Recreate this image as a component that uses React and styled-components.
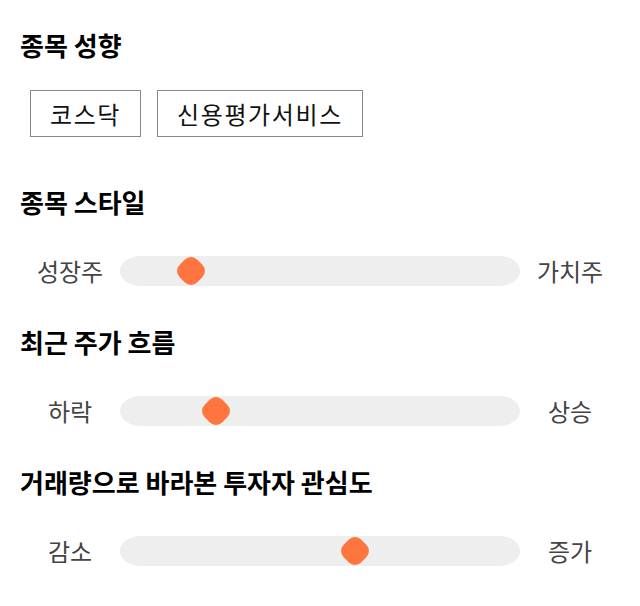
import React from "react";
import styled, { createGlobalStyle } from "styled-components";

const GlobalStyle = createGlobalStyle`
  body {
    margin: 0;
    background: #fff;
    font-family: "Noto Sans CJK KR", "Noto Sans", sans-serif;
  }
`;

const sliders = [
  { title: "종목 스타일", left: "성장주", right: "가치주", value: 15 },
  { title: "최근 주가 흐름", left: "하락", right: "상승", value: 22 },
  { title: "거래량으로 바라본 투자자 관심도", left: "감소", right: "증가", value: 59.5 },
];

const App = () => {
  return (
    <Page>
      <GlobalStyle />
      <Section>
        <Title>종목 성향</Title>
        <Tags>
          <Tag>코스닥</Tag>
          <Tag>신용평가서비스</Tag>
        </Tags>
      </Section>
      {sliders.map((s) => (
        <Section key={s.title}>
          <Title>{s.title}</Title>
          <SliderRow>
            <Side>{s.left}</Side>
            <Track>
              {/* thumb position comes from data */}
              <Thumb style={{ left: `calc(15px + (100% - 30px) * ${s.value / 100})` }} />
            </Track>
            <Side>{s.right}</Side>
          </SliderRow>
        </Section>
      ))}
    </Page>
  );
};

const Page = styled.div`
  width: 640px;
  box-sizing: border-box;
  padding: 28px 20px 0;
`;

const Section = styled.section`
  display: flex;
  flex-direction: column;
`;

const Title = styled.h2`
  margin: 0;
  font-size: 26px;
  line-height: 33px;
  font-weight: 700;
  color: #000;
`;

const Tags = styled.div`
  display: flex;
  gap: 16px;
  padding-left: 10px;
  margin: 29px 0 48px;
`;

const Tag = styled.div`
  height: 47px;
  box-sizing: border-box;
  padding: 0 19px;
  border: 1px solid #888;
  display: flex;
  align-items: center;
  font-size: 24px;
  letter-spacing: 1.6px;
  color: #111;
`;

const SliderRow = styled.div`
  display: grid;
  grid-template-columns: 100px 1fr 100px;
  align-items: center;
  height: 30px;
  margin: 38px 0 39px;
`;

const Side = styled.div`
  text-align: center;
  font-size: 24px;
  line-height: 30px;
  color: #444;
`;

const Track = styled.div`
  position: relative;
  height: 30px;
  background: #eeeeee;
  border-radius: 20px / 15px;
`;

const Thumb = styled.div`
  position: absolute;
  top: 50%;
  width: 25px;
  height: 25px;
  border-radius: 9px;
  background: #ff7540;
  transform: translate(-50%, -50%) rotate(45deg);
`;

export default App;
